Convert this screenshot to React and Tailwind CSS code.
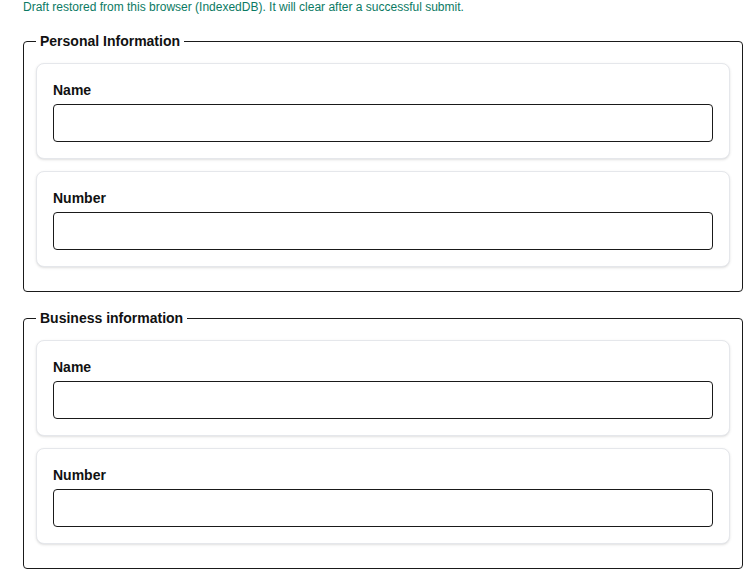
function Field({ label }) {
  return (
    <div className="rounded-lg border border-gray-200 bg-white p-4 shadow-sm">
      <label className="mb-1 block text-sm font-bold leading-5 text-[#111]">{label}</label>
      <input
        type="text"
        className="block h-[38px] w-full rounded border border-[#1a1a1a] bg-white px-2 text-sm outline-none"
      />
    </div>
  )
}

function Section({ title, className = '' }) {
  return (
    <fieldset className={`rounded border border-[#1a1a1a] px-3 pt-3 pb-6 ${className}`}>
      <legend className="px-1 text-sm font-bold leading-5 text-[#111]">{title}</legend>
      <div className="flex flex-col gap-3">
        <Field label="Name" />
        <Field label="Number" />
      </div>
    </fieldset>
  )
}

export default function App() {
  return (
    <div className="min-h-screen bg-white font-['Liberation_Sans',Arial,sans-serif]">
      <div className="ml-[23px] w-[720px]">
        <p className="mb-[17px] text-xs leading-[14px] text-[#0b7a63]">
          Draft restored from this browser (IndexedDB). It will clear after a successful submit.
        </p>
        <Section title="Personal Information" />
        <Section title="Business information" className="mt-4" />
      </div>
    </div>
  )
}
